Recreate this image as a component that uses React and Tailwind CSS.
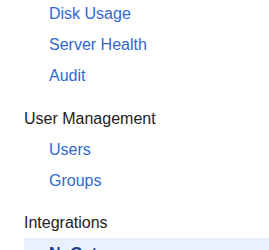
export default function App() {
  const link = "block py-[6px] pl-[25px] leading-[19px] text-[16px] text-[#3169cf]";
  const head = "py-[6px] pl-[24px] leading-[19px] text-[16px] text-[#222222]";
  return (
    <div className="w-[269px] h-[250px] overflow-hidden bg-white" style={{ fontFamily: '"Liberation Sans", Arial, sans-serif' }}>
      <ul className="-mt-[2px] pl-[24px]">
        <li><a className={link}>Disk Usage</a></li>
        <li><a className={link}>Server Health</a></li>
        <li><a className={link}>Audit</a></li>
      </ul>
      <div className="mt-[12px]">
        <div className={head}>User Management</div>
        <ul className="pl-[24px]">
          <li><a className={link}>Users</a></li>
          <li><a className={link}>Groups</a></li>
        </ul>
      </div>
      <div className="mt-[11px]">
        <div className={head}>Integrations</div>
        <ul className="pl-[24px]">
          <li className="bg-[#e8f1fc]"><a className="block py-[6px] pl-[25px] leading-[19px] text-[16px] font-bold text-[#1b3f8f]">NuGet</a></li>
          <li><a className={link}>Webhooks</a></li>
        </ul>
      </div>
    </div>
  );
}
